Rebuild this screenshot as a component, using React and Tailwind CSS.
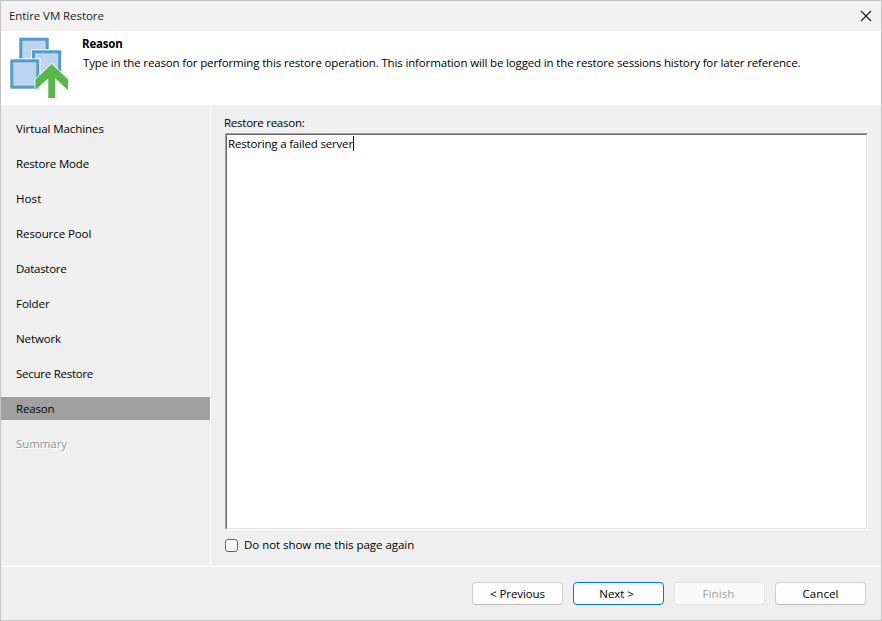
const steps = [
  ["Virtual Machines", "tracking-[-0.08px]"],
  ["Restore Mode", "tracking-[-0.16px]"],
  ["Host", "tracking-[0.1px]"],
  ["Resource Pool", "tracking-[-0.08px]"],
  ["Datastore", "tracking-[-0.27px]"],
  ["Folder", "tracking-[-0.05px]"],
  ["Network", "tracking-[-0.11px]"],
  ["Secure Restore", "tracking-[-0.26px]"],
  ["Reason", "tracking-[-0.16px]"],
  ["Summary", "tracking-[-0.08px]"],
];

function RestoreIcon() {
  return (
    <svg className="ml-[9px] mt-[6px] h-[62px] w-[60px] shrink-0" viewBox="10 37 60 62">
      <g fill="#bcd4ee" stroke="#559bc8" strokeWidth="3">
        <rect x="20.8" y="39.2" width="26.4" height="26.6" />
        <rect x="31.1" y="49.3" width="31" height="31" fill="#fff" stroke="none" />
        <rect x="33.5" y="51.8" width="26.2" height="26.2" />
        <rect x="10" y="58.4" width="30.5" height="31.5" fill="#fff" stroke="none" />
        <rect x="11.8" y="60.8" width="26" height="26.4" />
      </g>
      <path
        d="M51.7 64 68 79.6V90L55.1 78.3V98H48.3V78.3L35.3 90V79.6Z"
        fill="#55b948"
        stroke="#fff"
        strokeWidth="1.6"
        paintOrder="stroke"
      />
    </svg>
  );
}

function WizardButton({ children, className }) {
  return (
    <button
      className={`flex h-[23px] w-[91px] items-center justify-center rounded border pt-px ${className}`}
    >
      {children}
    </button>
  );
}

export default function App() {
  return (
    <div className="flex h-[621px] w-[882px] flex-col border border-[#c3c3c3] bg-[#efefef] font-['Open_Sans','Noto_Sans',sans-serif] text-[11.5px] leading-4 text-black">
      <header className="flex h-[30px] shrink-0 items-center justify-between bg-[#f2f2f2] pl-2 pr-[9px]">
        <h1 className="text-[11.5px] tracking-[-0.07px] text-[#1c1c1c]">Entire VM Restore</h1>
        <svg className="mb-px h-3 w-3" viewBox="0 0 12 12" fill="none" stroke="#202020" strokeWidth="1.2">
          <path d="M1 1 11 11M11 1 1 11" />
        </svg>
      </header>

      <section className="flex h-[74px] shrink-0 bg-white">
        <RestoreIcon />
        <div className="ml-3 whitespace-nowrap pt-[5px]">
          <h2 className="text-[11.5px] font-bold tracking-[-0.2px]">Reason</h2>
          <p className="ml-px mt-[3px] tracking-[-0.146px]">
            Type in the reason for performing this restore operation. This information will be logged in the restore
            sessions history for later reference.
          </p>
        </div>
      </section>

      <div className="flex h-[461px] shrink-0">
        <nav className="flex w-[210px] shrink-0 flex-col gap-3 border-r border-white pt-3">
          {steps.map(([name, tracking]) => (
            <div
              key={name}
              className={`flex h-[23px] items-center pl-[15px] ${tracking} ${
                name === "Reason" ? "bg-[#a0a0a0]" : ""
              } ${name === "Summary" ? "text-[#949494] [text-shadow:1px_1px_0_white]" : ""}`}
            >
              {name}
            </div>
          ))}
        </nav>
        <main className="flex flex-1 flex-col pl-[14px] pr-[13px] pt-[10px]">
          <label className="-ml-px h-[18px] tracking-[-0.25px]">Restore reason:</label>
          <div className="h-[397px] border border-b-white border-l-[#a0a0a0] border-r-white border-t-[#a0a0a0]">
            <div className="flex h-full items-start border border-b-[#e3e3e3] border-l-[#696969] border-r-[#e3e3e3] border-t-[#696969] bg-white pl-px pt-px">
              <span className="tracking-[-0.18px]">Restoring a failed server</span>
              <span className="h-[15px] w-px bg-black" />
            </div>
          </div>
          <label className="mt-[7px] flex items-center gap-1.5 tracking-[-0.04px]">
            <span className="h-[13px] w-[13px] rounded-[3px] border border-[#666] bg-[#f7f7f7]" />
            Do not show me this page again
          </label>
        </main>
      </div>

      <footer className="flex flex-1 items-start justify-end gap-[10px] border-t border-white pr-[15px] pt-[15px]">
        <WizardButton className="border-[#d0d0d0] border-b-[#bababa] bg-[#fdfdfd] tracking-[-0.08px]">&lt; Previous</WizardButton>
        <WizardButton className="border-[#0078d4] bg-[#fdfdfd] pr-1 tracking-[-0.08px]">Next &gt;</WizardButton>
        <WizardButton className="border-[#e6e6e6] bg-[#f9f9f9] pr-0.5 tracking-[0.1px] text-[#a0a0a0]">Finish</WizardButton>
        <WizardButton className="border-[#d0d0d0] border-b-[#bababa] bg-[#fdfdfd] tracking-[0.05px]">Cancel</WizardButton>
      </footer>
    </div>
  );
}
